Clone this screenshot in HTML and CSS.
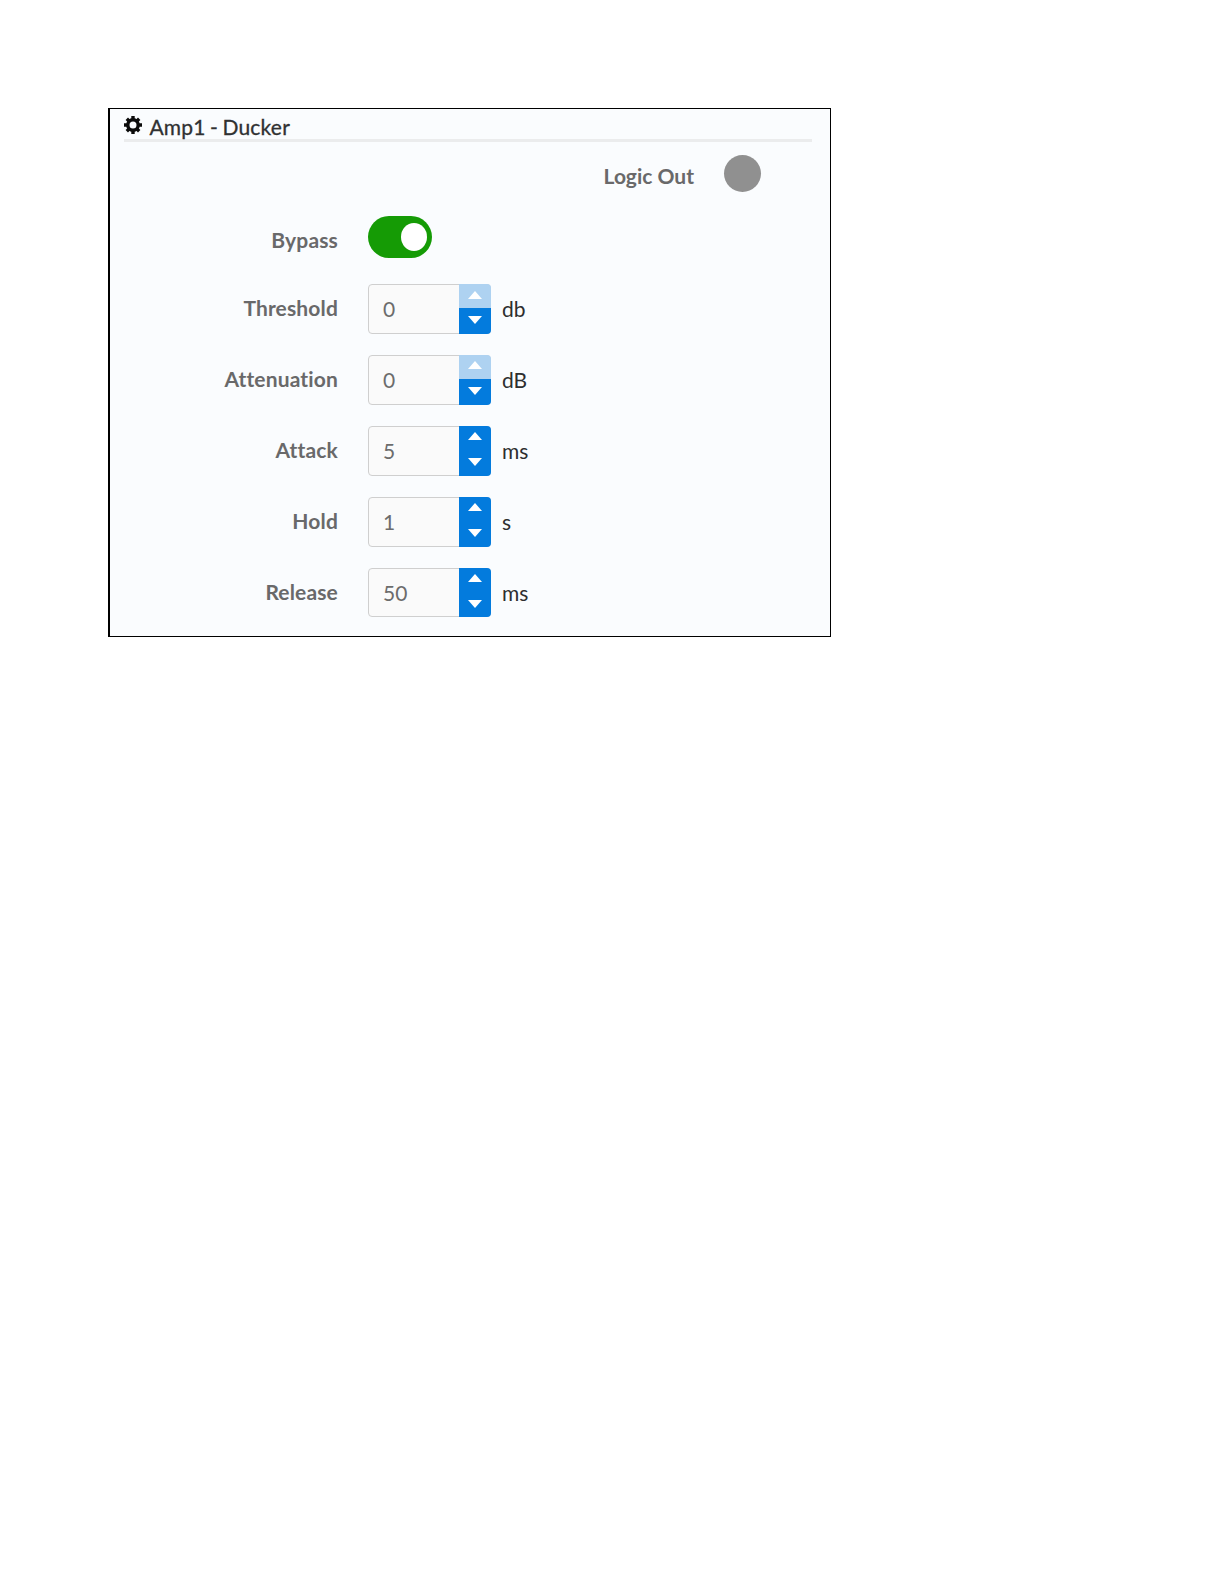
FILE: index.html
```html
<!DOCTYPE html>
<html lang="en">
<head>
  <meta charset="UTF-8" />
  <title>Amp1 - Ducker</title>
  <link rel="stylesheet" href="styles.css">
</head>
<body>
  <div class="panel">
    <!-- Header -->
    <div class="panel-header">
      <svg class="gear" viewBox="0 0 18 18">
        <g stroke="#0b0b0b" stroke-width="3.4">
          <path d="M9 0V4M9 14V18M0 9H4M14 9H18M2.8 2.8L5.4 5.4M12.6 12.6L15.2 15.2M2.8 15.2L5.4 12.6M12.6 5.4L15.2 2.8" />
        </g>
        <circle cx="9" cy="9" r="5.2" fill="none" stroke="#0b0b0b" stroke-width="3.4" />
      </svg>
      <span class="title">Amp1 - Ducker</span>
    </div>

    <div class="logic">
      <span class="label">Logic Out</span>
      <span class="led"></span>
    </div>

    <div class="row bypass">
      <span class="label">Bypass</span>
      <div class="toggle"><span class="knob"></span></div>
    </div>

    <!-- Settings -->
    <div class="settings">
      <div class="row">
        <span class="label">Threshold</span>
        <div class="spinner">
          <span class="value">0</span>
          <div class="buttons">
            <div class="btn up disabled"><svg class="arrow" viewBox="0 0 14 8"><path d="M0 8L7 0L14 8Z" /></svg></div>
            <div class="btn down"><svg class="arrow" viewBox="0 0 14 8"><path d="M0 0H14L7 8Z" /></svg></div>
          </div>
        </div>
        <span class="unit">db</span>
      </div>
      <div class="row">
        <span class="label">Attenuation</span>
        <div class="spinner">
          <span class="value">0</span>
          <div class="buttons">
            <div class="btn up disabled"><svg class="arrow" viewBox="0 0 14 8"><path d="M0 8L7 0L14 8Z" /></svg></div>
            <div class="btn down"><svg class="arrow" viewBox="0 0 14 8"><path d="M0 0H14L7 8Z" /></svg></div>
          </div>
        </div>
        <span class="unit">dB</span>
      </div>
      <div class="row">
        <span class="label">Attack</span>
        <div class="spinner">
          <span class="value">5</span>
          <div class="buttons">
            <div class="btn up"><svg class="arrow" viewBox="0 0 14 8"><path d="M0 8L7 0L14 8Z" /></svg></div>
            <div class="btn down"><svg class="arrow" viewBox="0 0 14 8"><path d="M0 0H14L7 8Z" /></svg></div>
          </div>
        </div>
        <span class="unit">ms</span>
      </div>
      <div class="row">
        <span class="label">Hold</span>
        <div class="spinner">
          <span class="value">1</span>
          <div class="buttons">
            <div class="btn up"><svg class="arrow" viewBox="0 0 14 8"><path d="M0 8L7 0L14 8Z" /></svg></div>
            <div class="btn down"><svg class="arrow" viewBox="0 0 14 8"><path d="M0 0H14L7 8Z" /></svg></div>
          </div>
        </div>
        <span class="unit">s</span>
      </div>
      <div class="row">
        <span class="label">Release</span>
        <div class="spinner">
          <span class="value">50</span>
          <div class="buttons">
            <div class="btn up"><svg class="arrow" viewBox="0 0 14 8"><path d="M0 8L7 0L14 8Z" /></svg></div>
            <div class="btn down"><svg class="arrow" viewBox="0 0 14 8"><path d="M0 0H14L7 8Z" /></svg></div>
          </div>
        </div>
        <span class="unit">ms</span>
      </div>
    </div>
  </div>
</body>
</html>
```
FILE: styles.css
```css
* {
  box-sizing: border-box;
}

body {
  margin: 0;
  padding: 108px;
  background: #fff;
  font-family: Lato, sans-serif;
  font-size: 21px;
  line-height: 26px;
  font-variant-ligatures: none;
}

.panel {
  width: 723px;
  height: 529px;
  background: #fafcfe;
  border: 1px solid #000;
  border-left-width: 2px;
  padding: 5px 18px 0 14px;
}

/* Header */
.panel-header {
  display: flex;
  height: 28px;
  border-bottom: 3px solid #ebeced;
}

.gear {
  width: 18px;
  height: 18px;
  margin: 2px 7.5px 0 0;
}

.title {
  color: #303132;
  line-height: 25px;
  letter-spacing: 0.2px;
  word-spacing: -1.2px;
  -webkit-text-stroke: 0.3px #303132;
}

.label {
  color: #69696a;
  font-weight: 700;
}

.logic {
  display: flex;
  justify-content: flex-end;
  margin-top: 13px;
  padding-right: 51px;
}

.logic .label {
  margin-top: 8px;
}

.led {
  width: 37px;
  height: 37px;
  margin-left: 30px;
  border-radius: 50%;
  background: #909090;
}

.row {
  display: flex;
}

.row .label {
  width: 214px;
  margin: 11px 30px 0 0;
  text-align: right;
  letter-spacing: 0.15px;
}

/* Bypass switch */
.bypass {
  margin-top: 24px;
}

.toggle {
  width: 63.5px;
  height: 42px;
  padding: 7px 5px 0 0;
  border-radius: 21px;
  background: #159b05;
}

.knob {
  display: block;
  width: 26px;
  height: 28px;
  margin-left: auto;
  border-radius: 50%;
  background: #fff;
}

/* Number inputs */
.settings {
  display: flex;
  flex-direction: column;
  gap: 21px;
  margin-top: 26px;
}

.spinner {
  display: flex;
  width: 122.5px;
  height: 49.9px;
  border: 1px solid #cfcfcf;
  border-radius: 4px;
  background: #fafafa;
}

.settings .label {
  margin-top: 11px;
}

.value {
  width: 90px;
  padding: 11px 0 0 14px;
  color: #6c6c6c;
}

.buttons {
  width: 32px;
  margin: -1px -1px -1px 0;
  border-radius: 0 4px 4px 0;
  overflow: hidden;
}

.btn {
  display: flex;
  justify-content: center;
  padding-left: 1px;
  background: #037bdd;
}

.up {
  height: 24px;
  padding-top: 6.5px;
}

.down {
  height: 26px;
  padding-top: 8px;
}

.disabled {
  background: #aed2f1;
}

.arrow {
  width: 14px;
  height: 8px;
  fill: #fff;
}

.unit {
  margin: 12px 0 0 11.5px;
  color: #2d2e2f;
}
```
